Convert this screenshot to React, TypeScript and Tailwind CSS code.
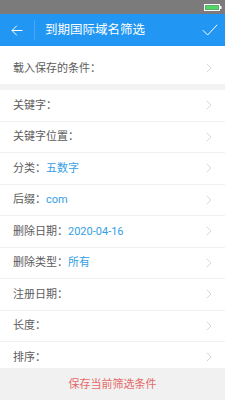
const rows: { label: string; value?: string }[] = [
  { label: '关键字：' },
  { label: '关键字位置：' },
  { label: '分类：', value: '五数字' },
  { label: '后缀：', value: 'com' },
  { label: '删除日期：', value: '2020-04-16' },
  { label: '删除类型：', value: '所有' },
  { label: '注册日期：' },
  { label: '长度：' },
  { label: '排序：' },
];

const Chevron = () => (
  <svg width="6" height="10" viewBox="0 0 6 10" fill="none">
    <path d="M0.8 0.8 L5 5 L0.8 9.2" stroke="#cccccc" strokeWidth="0.8" />
  </svg>
);

const Row = ({ label, value }: { label: string; value?: string }) => (
  <div className="h-[31.5px] shrink-0 flex items-center justify-between pl-[13px] pr-[13px] border-b border-[#f0f0f0]">
    <div className="flex items-center text-[11px] leading-none">
      <span className="text-[#5c5c5c]">{label}</span>
      {value && <span className="text-[#33a0e6]">{value}</span>}
    </div>
    <Chevron />
  </div>
);

export default function App() {
  return (
    <div className="w-[225px] h-[400px] relative overflow-hidden bg-white font-['Roboto','Noto_Sans_CJK_SC',sans-serif]">
      {/* status bar */}
      <div className="h-[14px] bg-[#7b7b7b] flex items-center justify-end pr-[3px]">
        <svg width="18" height="7" viewBox="0 0 18 7" fill="none">
          <rect x="0.5" y="0.5" width="15" height="6" stroke="#ffffff" strokeWidth="1" />
          <rect x="1.5" y="1.5" width="13" height="4" fill="#4cd964" />
          <rect x="16" y="2" width="1.5" height="3" fill="#ffffff" />
        </svg>
      </div>

      {/* header */}
      <div className="h-[32px] bg-[#2196f3] flex items-center">
        <div className="w-[34px] h-full flex items-center justify-center">
          <svg width="12" height="11" viewBox="0 0 12 11" fill="none">
            <path d="M11.5 5.5 H1 M5.8 0.7 L1 5.5 L5.8 10.3" stroke="#ffffff" strokeWidth="1" />
          </svg>
        </div>
        <div className="w-px h-[20px] bg-[#47a9f5]" />
        <div className="ml-[10px] flex-1 text-white text-[12.5px] leading-none">到期国际域名筛选</div>
        <div className="w-[32px] h-full flex items-center justify-center pl-[2px]">
          <svg width="16" height="12" viewBox="0 0 16 12" fill="none">
            <path d="M0.8 6.2 L5.6 11 L15.2 0.8" stroke="#ffffff" strokeWidth="1" />
          </svg>
        </div>
      </div>

      {/* list */}
      <div className="flex flex-col">
        <div className="h-[38px] flex items-center justify-between pl-[13px] pr-[13px] pt-[6px]">
          <span className="text-[11px] leading-none text-[#5c5c5c]">载入保存的条件：</span>
          <Chevron />
        </div>
        <div className="h-[6px] bg-[#f3f3f3]" />
        {rows.map((r) => (
          <Row key={r.label} label={r.label} value={r.value} />
        ))}
      </div>

      {/* save button */}
      <div className="absolute left-0 right-0 bottom-0 h-[32px] bg-[#f1f1f1] flex items-center justify-center">
        <span className="text-[11px] leading-none text-[#e46a6a]">保存当前筛选条件</span>
      </div>
    </div>
  );
}
